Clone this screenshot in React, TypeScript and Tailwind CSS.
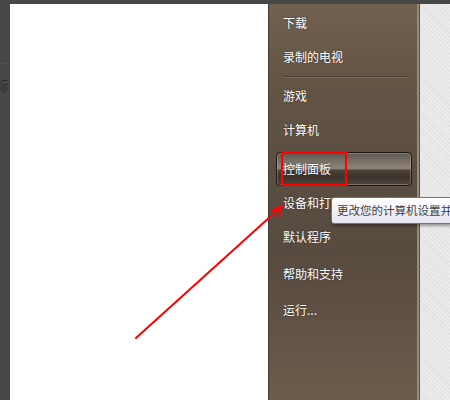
import React from "react";

const font = { fontFamily: '"Microsoft YaHei", "Noto Sans CJK SC", "Noto Sans", sans-serif' };

function Item({ label, className = "" }: { label: string; className?: string }) {
  return (
    <div
      className={`h-[34px] ml-[7px] mr-[5px] pl-[7px] flex items-center text-[12px] text-white [text-shadow:0_0_2px_rgba(0,0,0,0.45)] ${className}`}
    >
      {label}
    </div>
  );
}

export default function App() {
  return (
    <div className="relative w-[450px] h-[400px] overflow-hidden flex flex-col bg-[#474747]" style={font}>
      <div className="h-[4px] bg-[#474747]" />
      <div className="flex flex-1 min-h-0">
        <div className="relative w-[10px] bg-[#474747] overflow-hidden">
          <div className="absolute left-0 right-0 top-[59px] h-px bg-[#505050]" />
          <span className="absolute left-[-5px] top-[74px] text-[14px] text-[#2f2f2f] leading-none">标</span>
        </div>
        <div className="w-[258px] bg-white" />
        <div className="w-[152px] flex border-l border-[#413c37] bg-[linear-gradient(to_bottom,#72614f_0%,#645545_18%,#5a4d41_45%,#584b3f_62%,#5e5043_78%,#6d5c4b_100%)]">
          <div className="flex-1 flex flex-col pt-[2px]">
            <Item label="下载" />
            <Item label="录制的电视" />
            <div className="h-[5px] ml-[14px] mr-[10px] flex flex-col pt-[2px]">
              <div className="h-px bg-[#4b4035]" />
              <div className="h-px bg-[#7a6b5c]" />
            </div>
            <Item label="游戏" />
            <Item label="计算机" />
            <div className="h-[34px] mt-[5px] ml-[7px] mr-[5px] pl-[6px] flex items-center text-[12px] text-white [text-shadow:0_0_2px_rgba(0,0,0,0.6)] rounded-[4px] border border-[#1e1a17] shadow-[inset_0_0_0_1px_rgba(200,190,180,0.35)] bg-[linear-gradient(to_bottom,#5f564d_0%,#7c7369_30%,#8d857c_48%,#4c433a_54%,#3b322b_75%,#4f453c_100%)]">
              控制面板
            </div>
            <Item label="设备和打印机" />
            <Item label="默认程序" />
            <Item label="帮助和支持" className="mt-[3px]" />
            <Item label="运行..." className="mt-[2px]" />
          </div>
          <div className="w-[2px] bg-[#978a7d]" />
          <div className="w-px bg-[#57514b]" />
        </div>
        <div className="flex-1 bg-[#e9e9e9] bg-[repeating-linear-gradient(45deg,#ececec_0px,#ececec_1px,#e1e1e1_1px,#e1e1e1_2px,#eaeaea_2px,#eaeaea_3px)]" />
      </div>

      {/* red highlight box */}
      <div className="absolute left-[281px] top-[152px] w-[66px] h-[34px] border-2 border-[#ff0000]" />

      {/* tooltip */}
      <div className="absolute left-[331px] top-[197px] w-[140px] h-[27px] rounded-[3px] border border-[#767676] bg-[linear-gradient(to_bottom,#ffffff,#e4e5f0)] shadow-[1px_2px_3px_rgba(0,0,0,0.35)] pl-[5px] flex items-center overflow-hidden whitespace-nowrap text-[11.5px] text-[#3f3f3f]">
        更改您的计算机设置并自定义其功能。
      </div>

      {/* red arrow */}
      <svg className="absolute left-0 top-0 pointer-events-none" width="450" height="400" viewBox="0 0 450 400">
        <line x1="136" y1="338" x2="281" y2="207" stroke="#ff0000" strokeWidth="2" strokeLinecap="round" />
        <polyline points="272,211 282,206 279,216" fill="none" stroke="#ff0000" strokeWidth="2" strokeLinecap="round" strokeLinejoin="round" />
      </svg>
    </div>
  );
}
